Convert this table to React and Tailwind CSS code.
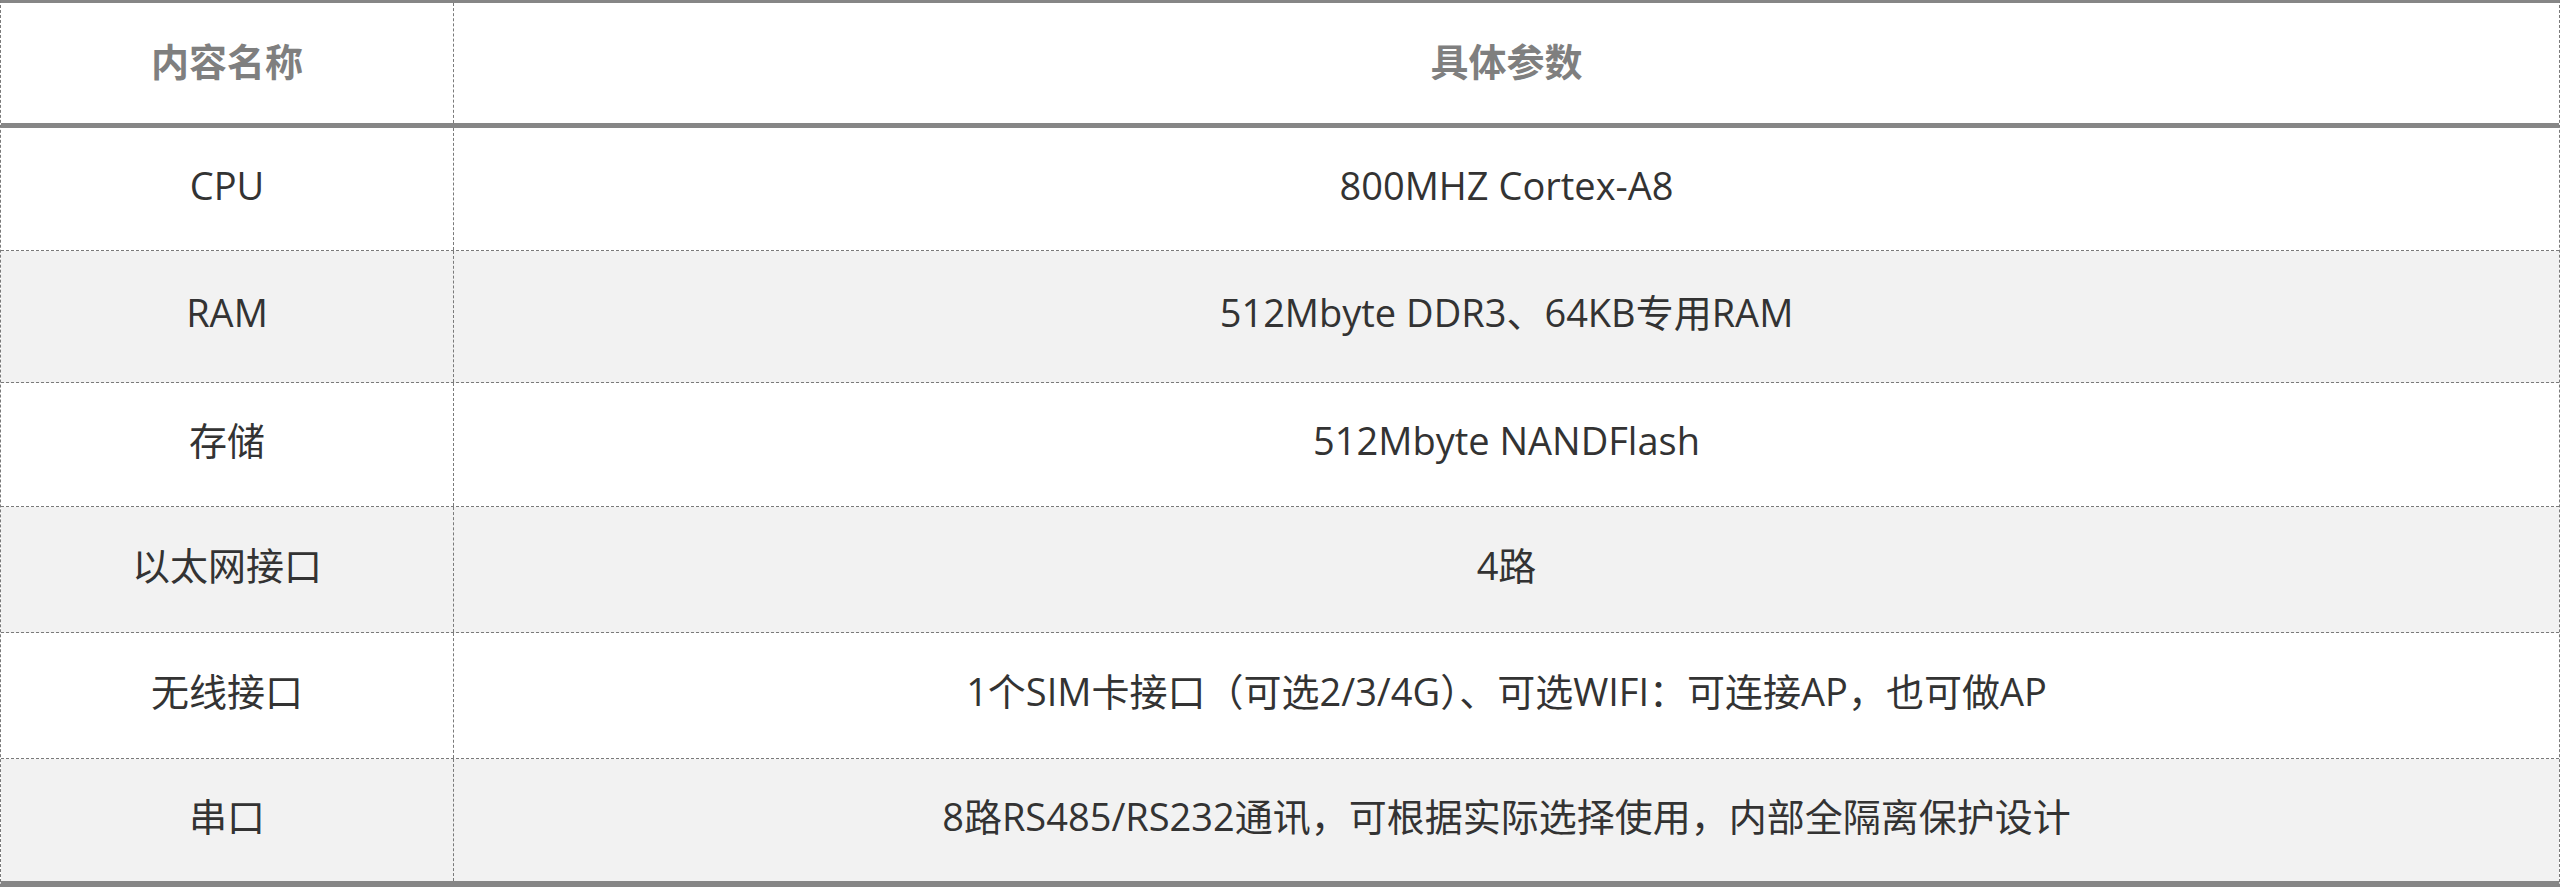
const rows = [
  { name: 'CPU', value: '800MHZ Cortex-A8', h: 'h-[122px]', bg: 'bg-white' },
  { name: 'RAM', value: '512Mbyte DDR3、64KB专用RAM', h: 'h-[131px]', bg: 'bg-[#f2f2f2]' },
  { name: '存储', value: '512Mbyte NANDFlash', h: 'h-[123px]', bg: 'bg-white' },
  { name: '以太网接口', value: '4路', h: 'h-[125px]', bg: 'bg-[#f2f2f2]' },
  { name: '无线接口', value: '1个SIM卡接口（可选2/3/4G）、可选WIFI：可连接AP，也可做AP', h: 'h-[125px]', bg: 'bg-white' },
  { name: '串口', value: '8路RS485/RS232通讯，可根据实际选择使用，内部全隔离保护设计', h: 'h-[122px]', bg: 'bg-[#f2f2f2]' },
];

export default function App() {
  return (
    <div className="w-[2560px] h-[896px] bg-white font-['Open_Sans','Noto_Sans_CJK_SC',sans-serif]">
      <div className="border-x border-dashed border-x-[#7a7a7a] border-t-[3px] border-t-[#868686] [border-top-style:solid] border-b-[6px] border-b-[#868686] [border-bottom-style:solid]">
        {/* header */}
        <div className="flex h-[120px] box-content border-b-[5px] border-solid border-b-[#868686] bg-white">
          <div className="w-[453px] shrink-0 flex items-center justify-center pb-[8px] border-r border-dashed border-r-[#7a7a7a] text-[38px] font-bold text-[#7f7f7f] font-['Noto_Sans_CJK_SC',sans-serif]">
            内容名称
          </div>
          <div className="flex-1 flex items-center justify-center pb-[8px] text-[38px] font-bold text-[#7f7f7f] font-['Noto_Sans_CJK_SC',sans-serif]">
            具体参数
          </div>
        </div>

        {rows.map((r, i) => (
          <div
            key={r.name}
            className={`flex ${r.h} ${r.bg} ${i < rows.length - 1 ? 'box-content border-b border-dashed border-b-[#7a7a7a]' : ''}`}
          >
            <div className="w-[453px] shrink-0 flex items-center justify-center pb-[8px] border-r border-dashed border-r-[#7a7a7a] text-[38px] text-[#333333]">
              {r.name}
            </div>
            <div className="flex-1 flex items-center justify-center pb-[8px] text-[38px] text-[#333333]">
              {r.value}
            </div>
          </div>
        ))}
      </div>
    </div>
  );
}
